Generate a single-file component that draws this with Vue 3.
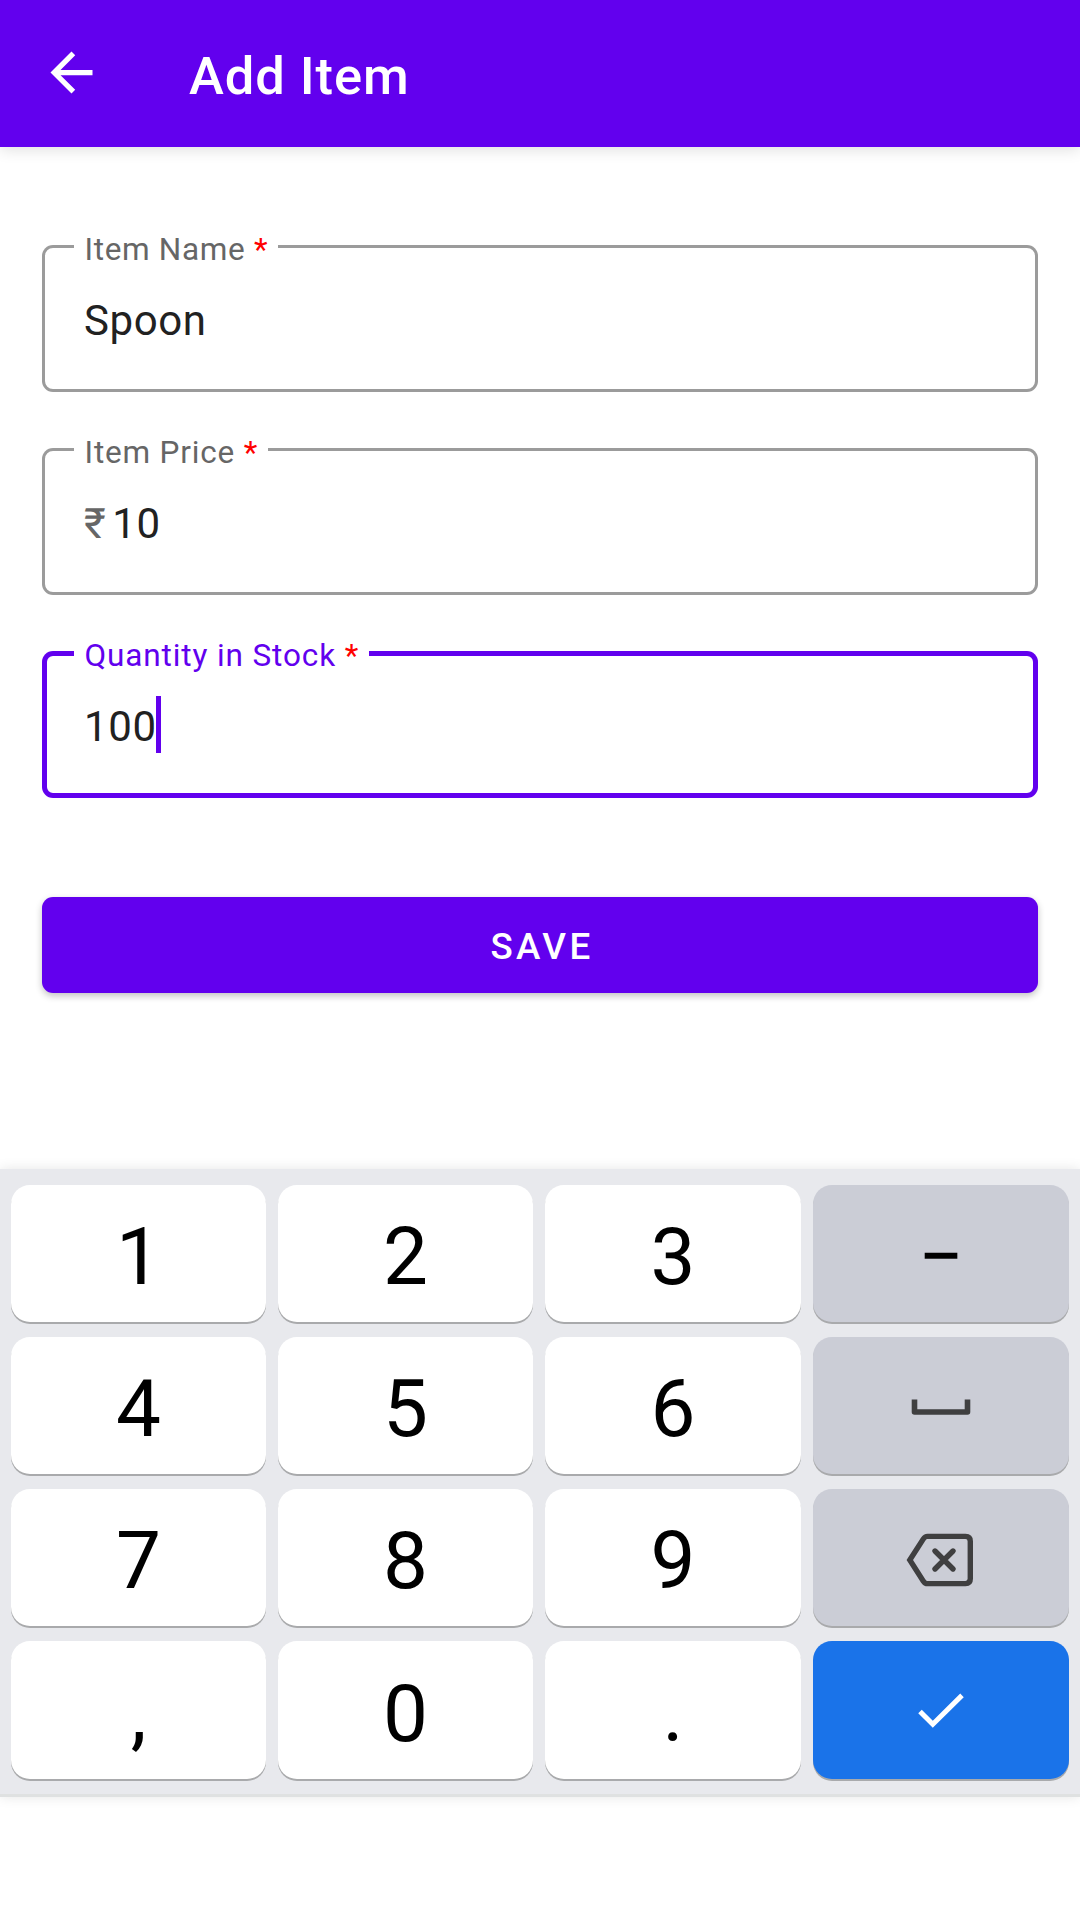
<script setup>
const fields = [
  { label: 'Item Name', value: 'Spoon', tracking: 0.021 },
  { label: 'Item Price', value: '10', prefix: '₹', tracking: 0.026 },
  { label: 'Quantity in Stock', value: '100', focused: true, tracking: 0.028 },
]
const keys = ['1', '2', '3', '−', '4', '5', '6', 'space', '7', '8', '9', 'delete', ',', '0', '.', 'done']
const kind = (k) =>
  k === 'done' ? 'primary' : ['−', 'space', 'delete'].includes(k) ? 'secondary' : 'plain'
</script>

<template>
  <div class="screen">
    <header class="bar">
      <svg class="back" viewBox="0 0 24 24">
        <path fill="#fff" d="M20 11H7.83l5.59-5.59L12 4l-8 8 8 8 1.41-1.41L7.83 13H20v-2z" />
      </svg>
      <h1>Add Item</h1>
    </header>

    <main>
      <div v-for="f in fields" :key="f.label" class="field" :class="{ focused: f.focused }">
        <label :style="{ letterSpacing: f.tracking + 'em' }">{{ f.label }} <b>*</b></label>
        <span v-if="f.prefix" class="prefix">{{ f.prefix }}</span>
        <span>{{ f.value }}</span>
        <i v-if="f.focused" class="caret"></i>
      </div>
      <button class="save">SAVE</button>
    </main>

    <section class="keyboard">
      <div v-for="k in keys" :key="k" class="key" :class="kind(k)">
        <svg v-if="k === 'space'" class="space" width="60" height="18" viewBox="0 0 60 18">
          <path d="M3.5 1.5V14H56.5V1.5" fill="none" stroke="#3f3f40" stroke-width="5.6" stroke-linejoin="round" />
        </svg>
        <svg v-else-if="k === 'delete'" class="del" width="68" height="54" viewBox="0 0 68 54">
          <g fill="none" stroke="#3f3f40" stroke-width="5.4">
            <path d="M3.8 27L17.2 6.1Q19 3.4 21.5 3.4H59.5Q64.3 3.4 64.3 8.2V45.8Q64.3 50.6 59.5 50.6H21.5Q19 50.6 17.2 47.9Z" />
            <path d="M29 18L47 36M47 18L29 36" stroke-linecap="round" />
          </g>
        </svg>
        <svg v-else-if="k === 'done'" class="done" width="48" height="36" viewBox="0 0 48 36">
          <path d="M3 18.4L15.8 31.2L45 2.4" fill="none" stroke="#fff" stroke-width="5" />
        </svg>
        <span v-else>{{ k }}</span>
      </div>
    </section>
  </div>
</template>

<style>
body {
  margin: 0;
  background: #fff;
}
</style>

<style scoped>
.screen {
  width: 1080px;
  height: 1920px;
  display: flex;
  flex-direction: column;
  background: #fff;
  font-family: Roboto, sans-serif;
  overflow: hidden;
}
.bar {
  height: 147px;
  flex: none;
  box-sizing: border-box;
  padding-left: 39.5px;
  display: flex;
  align-items: center;
  background: #6200ee;
  box-shadow: 0 3px 14px rgba(0, 0, 0, 0.12);
}
.back {
  width: 63px;
  height: 63px;
  margin-bottom: 2px;
}
h1 {
  margin: 0 0 0 86.5px;
  padding-top: 4px;
  font-size: 52.5px;
  line-height: 62px;
  font-weight: 500;
  letter-spacing: 0.018em;
  color: #fff;
}
main {
  height: 924px;
  flex: none;
  padding: 98px 42px 0;
  display: flex;
  flex-direction: column;
  gap: 56px;
}
.field {
  position: relative;
  height: 147px;
  box-sizing: border-box;
  padding: 5px 42px 0;
  border-radius: 11px;
  box-shadow: inset 0 0 0 3px #9b9b9b;
  display: flex;
  align-items: center;
  font-size: 42px;
  line-height: 50px;
  letter-spacing: 0.014em;
  color: #212121;
}
.field.focused {
  box-shadow: inset 0 0 0 5px #6200ee;
}
label {
  position: absolute;
  left: 32px;
  top: -14px;
  padding: 0 10px 0 10.5px;
  background: #fff;
  font-size: 31.5px;
  line-height: 38px;
  color: #666;
  white-space: nowrap;
}
.focused label {
  color: #6200ee;
}
label b {
  font-weight: 400;
  color: #f00;
}
.prefix {
  margin-right: 6px;
  color: #666;
}
.caret {
  width: 5px;
  height: 57px;
  margin: -6px 0 0 -1px;
  background: #6200ee;
}
.save {
  height: 96px;
  margin-top: 43px;
  padding: 3px 0 0 4px;
  border: 0;
  border-radius: 11px;
  background: #6200ee;
  box-shadow: 0 3px 7px rgba(0, 0, 0, 0.24);
  color: #fff;
  font-family: inherit;
  font-size: 36.75px;
  font-weight: 500;
  letter-spacing: 0.091em;
}
.keyboard {
  height: 628px;
  flex: none;
  box-sizing: border-box;
  padding: 16px 11px 0;
  border-bottom: 3px solid #dfe1e1;
  display: grid;
  grid-template-columns: 255px 255px 256px 256px;
  grid-template-rows: 137px 137px 137px 138px;
  justify-content: space-between;
  align-content: start;
  row-gap: 15px;
  background: #e8e9ed;
  box-shadow: 0 0 12px rgba(0, 0, 0, 0.1);
}
.key {
  display: flex;
  align-items: center;
  justify-content: center;
  border-radius: 19px;
  background: #fff;
  box-shadow: 0 2px 0 #a9aaac;
  font-size: 80px;
  line-height: 94px;
  color: #000;
}
.key span {
  padding-top: 6px;
}
.key:nth-child(n + 13) span {
  padding-top: 7px;
}
.secondary {
  background: #cbcdd6;
}
.primary {
  background: #1a73e9;
}
.space {
  margin-top: 2px;
}
.done {
  margin-top: 1px;
}
.del {
  margin: 4px 2px 0 0;
}
</style>
